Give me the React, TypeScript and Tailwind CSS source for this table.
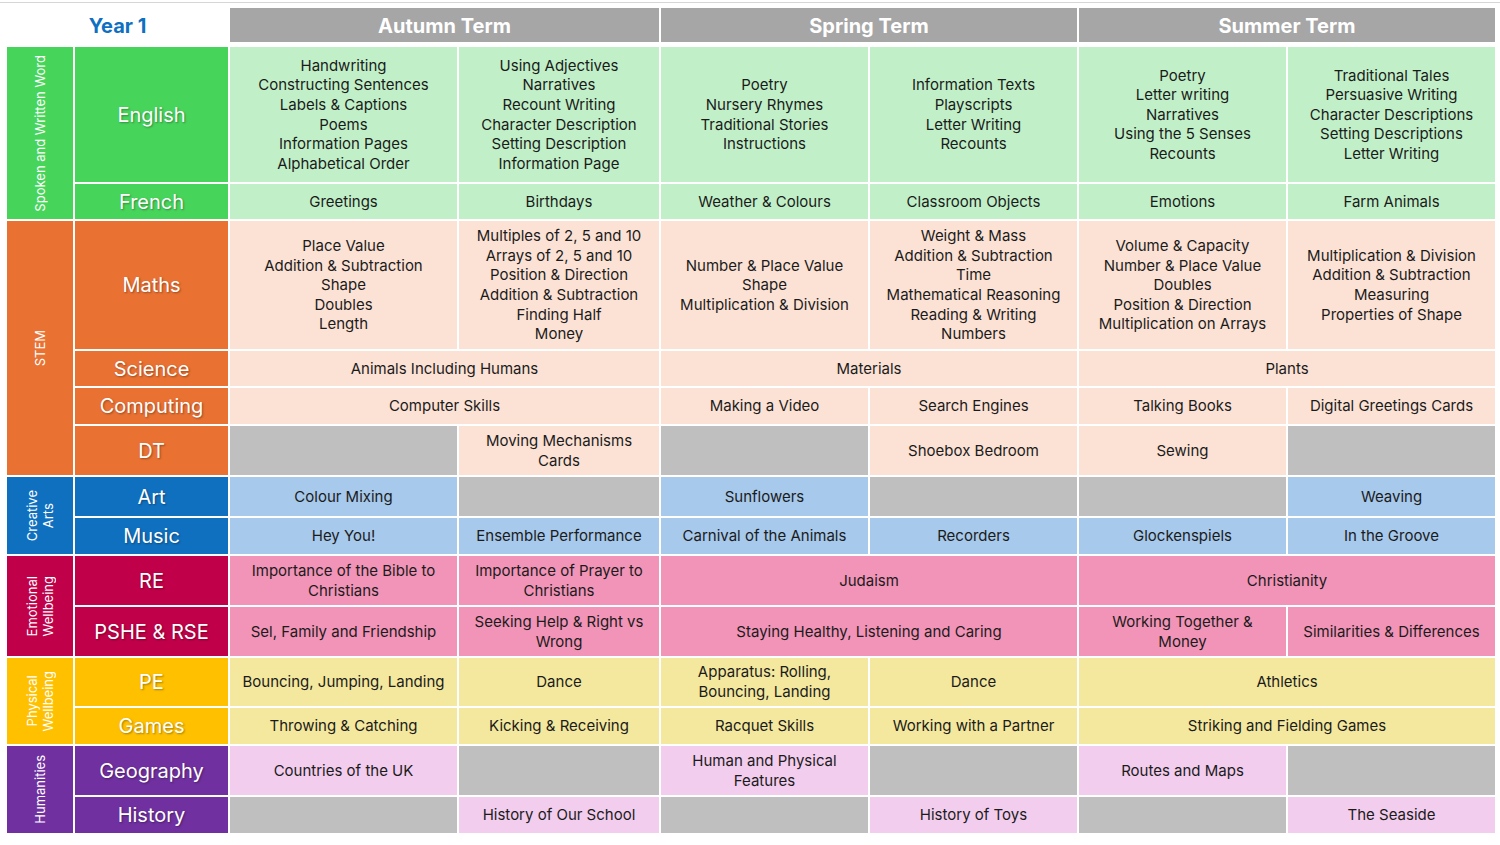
import React from "react";

type Cell = {
  text?: string;
  span?: boolean;
  gray?: boolean;
};

type Row = {
  subject: string;
  cells: Cell[];
};

type Group = {
  label: string;
  rowSpan: string;
  dark: string;
  light: string;
  rows: Row[];
};

const t = (text: string): Cell => ({ text });
const wide = (text: string): Cell => ({ text, span: true });
const gray: Cell = { gray: true };

const groups: Group[] = [
  {
    label: "Spoken and Written Word",
    rowSpan: "row-span-2",
    dark: "bg-[#47d45b]",
    light: "bg-[#c1f0c8]",
    rows: [
      {
        subject: "English",
        cells: [
          t("Handwriting\nConstructing Sentences\nLabels & Captions\nPoems\nInformation Pages\nAlphabetical Order"),
          t("Using Adjectives\nNarratives\nRecount Writing\nCharacter Description\nSetting Description\nInformation Page"),
          t("Poetry\nNursery Rhymes\nTraditional Stories\nInstructions"),
          t("Information Texts\nPlayscripts\nLetter Writing\nRecounts"),
          t("Poetry\nLetter writing\nNarratives\nUsing the 5 Senses\nRecounts"),
          t("Traditional Tales\nPersuasive Writing\nCharacter Descriptions\nSetting Descriptions\nLetter Writing"),
        ],
      },
      {
        subject: "French",
        cells: [
          t("Greetings"),
          t("Birthdays"),
          t("Weather & Colours"),
          t("Classroom Objects"),
          t("Emotions"),
          t("Farm Animals"),
        ],
      },
    ],
  },
  {
    label: "STEM",
    rowSpan: "row-span-4",
    dark: "bg-[#e97132]",
    light: "bg-[#fbe2d5]",
    rows: [
      {
        subject: "Maths",
        cells: [
          t("Place Value\nAddition & Subtraction\nShape\nDoubles\nLength"),
          t("Multiples of 2, 5 and 10\nArrays of 2, 5 and 10\nPosition & Direction\nAddition & Subtraction\nFinding Half\nMoney"),
          t("Number & Place Value\nShape\nMultiplication & Division"),
          t("Weight & Mass\nAddition & Subtraction\nTime\nMathematical Reasoning\nReading & Writing\nNumbers"),
          t("Volume & Capacity\nNumber & Place Value\nDoubles\nPosition & Direction\nMultiplication on Arrays"),
          t("Multiplication & Division\nAddition & Subtraction\nMeasuring\nProperties of Shape"),
        ],
      },
      {
        subject: "Science",
        cells: [wide("Animals Including Humans"), wide("Materials"), wide("Plants")],
      },
      {
        subject: "Computing",
        cells: [
          wide("Computer Skills"),
          t("Making a Video"),
          t("Search Engines"),
          t("Talking Books"),
          t("Digital Greetings Cards"),
        ],
      },
      {
        subject: "DT",
        cells: [gray, t("Moving Mechanisms\nCards"), gray, t("Shoebox Bedroom"), t("Sewing"), gray],
      },
    ],
  },
  {
    label: "Creative\nArts",
    rowSpan: "row-span-2",
    dark: "bg-[#0f70c0]",
    light: "bg-[#a6c9ec]",
    rows: [
      {
        subject: "Art",
        cells: [t("Colour Mixing"), gray, t("Sunflowers"), gray, gray, t("Weaving")],
      },
      {
        subject: "Music",
        cells: [
          t("Hey You!"),
          t("Ensemble Performance"),
          t("Carnival of the Animals"),
          t("Recorders"),
          t("Glockenspiels"),
          t("In the Groove"),
        ],
      },
    ],
  },
  {
    label: "Emotional\nWellbeing",
    rowSpan: "row-span-2",
    dark: "bg-[#c00048]",
    light: "bg-[#f294b8]",
    rows: [
      {
        subject: "RE",
        cells: [
          t("Importance of the Bible to\nChristians"),
          t("Importance of Prayer to\nChristians"),
          wide("Judaism"),
          wide("Christianity"),
        ],
      },
      {
        subject: "PSHE & RSE",
        cells: [
          t("Sel, Family and Friendship"),
          t("Seeking Help & Right vs\nWrong"),
          wide("Staying Healthy, Listening and Caring"),
          t("Working Together &\nMoney"),
          t("Similarities & Differences"),
        ],
      },
    ],
  },
  {
    label: "Physical\nWellbeing",
    rowSpan: "row-span-2",
    dark: "bg-[#ffc000]",
    light: "bg-[#f3e89e]",
    rows: [
      {
        subject: "PE",
        cells: [
          t("Bouncing, Jumping, Landing"),
          t("Dance"),
          t("Apparatus: Rolling,\nBouncing, Landing"),
          t("Dance"),
          wide("Athletics"),
        ],
      },
      {
        subject: "Games",
        cells: [
          t("Throwing & Catching"),
          t("Kicking & Receiving"),
          t("Racquet Skills"),
          t("Working with a Partner"),
          wide("Striking and Fielding Games"),
        ],
      },
    ],
  },
  {
    label: "Humanities",
    rowSpan: "row-span-2",
    dark: "bg-[#7030a0]",
    light: "bg-[#f2cdee]",
    rows: [
      {
        subject: "Geography",
        cells: [t("Countries of the UK"), gray, t("Human and Physical\nFeatures"), gray, t("Routes and Maps"), gray],
      },
      {
        subject: "History",
        cells: [gray, t("History of Our School"), gray, t("History of Toys"), gray, t("The Seaside")],
      },
    ],
  },
];

const cols = "grid-cols-[66px_153px_227px_200px_207px_207px_207px_207px]";

export default function App() {
  return (
    <div className="min-h-[845px] bg-white font-['Inter','Liberation_Sans',sans-serif] text-[#1b1b1b]">
      <div className="pt-[2px]">
        <div className="h-px bg-[#d6d6d6]" />
      </div>

      {/* term header */}
      <div className={`ml-[7px] mt-[5px] grid ${cols} grid-rows-[34px] gap-x-[2px]`}>
        <div className="col-span-2 flex items-center justify-center pt-[1px] text-[20px] font-bold text-[#0f6fc1]">
          Year 1
        </div>
        {["Autumn Term", "Spring Term", "Summer Term"].map((term) => (
          <div
            key={term}
            className="col-span-2 flex items-center justify-center bg-[#a6a6a6] pt-[1px] text-[20px] font-bold text-white"
          >
            {term}
          </div>
        ))}
      </div>

      {/* curriculum body */}
      <div
        className={`ml-[7px] mt-[5px] grid ${cols} grid-rows-[135px_35px_128px_35px_36px_49px_39px_36px_49px_49px_48px_36px_49px_36px] gap-[2px]`}
      >
        {groups.map((g) => (
          <React.Fragment key={g.label}>
            <div
              className={`col-start-1 ${g.rowSpan} ${g.dark} flex items-center justify-center text-white`}
            >
              <span className="rotate-180 whitespace-pre-line text-center text-[13px] leading-[16px] [writing-mode:vertical-rl]">
                {g.label}
              </span>
            </div>
            {g.rows.map((r) => (
              <React.Fragment key={r.subject}>
                <div
                  className={`col-start-2 ${g.dark} flex items-center justify-center text-[20px] text-white [text-shadow:1px_1px_2px_rgba(0,0,0,0.35)]`}
                >
                  {r.subject}
                </div>
                {r.cells.map((c, ci) => (
                  <div
                    key={ci}
                    className={`${c.span ? "col-span-2" : ""} ${c.gray ? "bg-[#bfbfbf]" : g.light} flex items-center justify-center whitespace-pre-line px-1 text-center text-[15px] leading-[19.6px]`}
                  >
                    {c.text}
                  </div>
                ))}
              </React.Fragment>
            ))}
          </React.Fragment>
        ))}
      </div>
    </div>
  );
}
